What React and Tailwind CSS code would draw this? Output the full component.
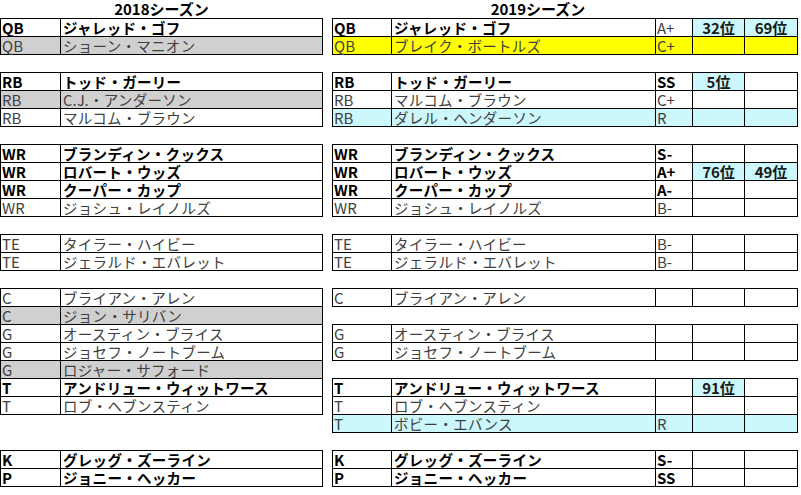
import React from 'react';

const GRAY = 'bg-[#d0d0d0]';
const YEL = 'bg-[#ffff00]';
const CYAN = 'bg-[#ccf7fd]';

// row: [pos, name, bold, fill]
const left = [
    { rows: [
        ['QB', 'ジャレッド・ゴフ', true],
        ['QB', 'ショーン・マニオン', false, GRAY],
    ] },
    { gap: 17 },
    { rows: [
        ['RB', 'トッド・ガーリー', true],
        ['RB', 'C.J.・アンダーソン', false, GRAY],
        ['RB', 'マルコム・ブラウン', false],
    ] },
    { gap: 17 },
    { rows: [
        ['WR', 'ブランディン・クックス', true],
        ['WR', 'ロバート・ウッズ', true],
        ['WR', 'クーパー・カップ', true],
        ['WR', 'ジョシュ・レイノルズ', false],
    ] },
    { gap: 17 },
    { rows: [
        ['TE', 'タイラー・ハイビー', false],
        ['TE', 'ジェラルド・エバレット', false],
    ] },
    { gap: 17 },
    { rows: [
        ['C', 'ブライアン・アレン', false],
        ['C', 'ジョン・サリバン', false, GRAY],
        ['G', 'オースティン・ブライス', false],
        ['G', 'ジョセフ・ノートブーム', false],
        ['G', 'ロジャー・サフォード', false, GRAY],
        ['T', 'アンドリュー・ウィットワース', true],
        ['T', 'ロブ・ヘブンスティン', false],
    ] },
    { gap: 35 },
    { rows: [
        ['K', 'グレッグ・ズーライン', true],
        ['P', 'ジョニー・ヘッカー', true],
    ] },
];

// row: [pos, name, bold, fill, grade, rank1, rank2]
const right = [
    { rows: [
        ['QB', 'ジャレッド・ゴフ', true, null, 'A+', '32位', '69位'],
        ['QB', 'ブレイク・ボートルズ', false, YEL, 'C+', '', ''],
    ] },
    { gap: 17 },
    { rows: [
        ['RB', 'トッド・ガーリー', true, null, 'SS', '5位', ''],
        ['RB', 'マルコム・ブラウン', false, null, 'C+', '', ''],
        ['RB', 'ダレル・ヘンダーソン', false, CYAN, 'R', '', ''],
    ] },
    { gap: 17 },
    { rows: [
        ['WR', 'ブランディン・クックス', true, null, 'S-', '', ''],
        ['WR', 'ロバート・ウッズ', true, null, 'A+', '76位', '49位'],
        ['WR', 'クーパー・カップ', true, null, 'A-', '', ''],
        ['WR', 'ジョシュ・レイノルズ', false, null, 'B-', '', ''],
    ] },
    { gap: 17 },
    { rows: [
        ['TE', 'タイラー・ハイビー', false, null, 'B-', '', ''],
        ['TE', 'ジェラルド・エバレット', false, null, 'B-', '', ''],
    ] },
    { gap: 17 },
    { rows: [
        ['C', 'ブライアン・アレン', false, null, '', '', ''],
    ] },
    { gap: 17 },
    { rows: [
        ['G', 'オースティン・ブライス', false, null, '', '', ''],
        ['G', 'ジョセフ・ノートブーム', false, null, '', '', ''],
    ] },
    { gap: 17 },
    { rows: [
        ['T', 'アンドリュー・ウィットワース', true, null, '', '91位', ''],
        ['T', 'ロブ・ヘブンスティン', false, null, '', '', ''],
        ['T', 'ボビー・エバンス', false, CYAN, 'R', '', ''],
    ] },
    { gap: 17 },
    { rows: [
        ['K', 'グレッグ・ズーライン', true, null, 'S-', '', ''],
        ['P', 'ジョニー・ヘッカー', true, null, 'SS', '', ''],
    ] },
];

const font = { fontFamily: '"Noto Sans CJK JP", "Noto Sans", sans-serif' };

const cellBase = 'h-[17px] border-r border-black leading-[17px] whitespace-nowrap';

const textCls = (bold) => bold ? 'font-bold text-black' : 'font-normal text-[#404040]';

const LeftRow = ({ r }) => {
    const [pos, name, bold, fill] = r;
    return (
        <div className="flex border-b border-black">
            <div className={`${cellBase} w-[60px] pl-[1px] text-[15px] ${fill || ''} ${textCls(bold)}`}>{pos}</div>
            <div className={`${cellBase} w-[262px] pl-[2px] text-[14.5px] tracking-[0.3px] ${fill || ''} ${textCls(bold)}`}>{name}</div>
        </div>
    );
};

const RightRow = ({ r }) => {
    const [pos, name, bold, fill, grade, r1, r2] = r;
    const rank = (v) => (
        <div className={`${cellBase} text-center text-[15px] font-bold text-[#1a1a1a] ${fill || (v ? CYAN : '')}`}>{v}</div>
    );
    return (
        <div className="flex border-b border-black">
            <div className={`${cellBase} w-[59px] pl-[1px] text-[15px] ${fill || ''} ${textCls(bold)}`}>{pos}</div>
            <div className={`${cellBase} w-[264px] pl-[2px] text-[14.5px] tracking-[0.3px] ${fill || ''} ${textCls(bold)}`}>{name}</div>
            <div className={`${cellBase} w-[37px] pl-[1px] text-[15px] ${fill || ''} ${textCls(bold && name !== 'ジャレッド・ゴフ')}`}>{grade}</div>
            <div className="w-[52px] flex flex-col">{rank(r1)}</div>
            <div className="w-[53px] flex flex-col">{rank(r2)}</div>
        </div>
    );
};

const Column = ({ blocks, Row, widthCls }) => (
    <div className={`flex flex-col ${widthCls}`}>
        {blocks.map((b, i) =>
            b.gap ? (
                <div key={i} style={{ height: b.gap }} />
            ) : (
                <div key={i} className="flex flex-col border-t border-l border-black">
                    {b.rows.map((r, j) => <Row key={j} r={r} />)}
                </div>
            )
        )}
    </div>
);

export default function App() {
    return (
        <div className="w-[801px] h-[495px] bg-white overflow-hidden" style={font}>
            <div className="flex">
                <div className="flex flex-col">
                    <div className="h-[18px] w-[323px] text-center text-[15px] font-bold leading-[17px] text-black">2018シーズン</div>
                    <Column blocks={left} Row={LeftRow} widthCls="w-[323px]" />
                </div>
                <div className="flex flex-col ml-[9px]">
                    <div className="h-[18px] w-[412px] text-center text-[15px] font-bold leading-[17px] text-black">2019シーズン</div>
                    <Column blocks={right} Row={RightRow} widthCls="w-[466px]" />
                </div>
            </div>
        </div>
    );
}
